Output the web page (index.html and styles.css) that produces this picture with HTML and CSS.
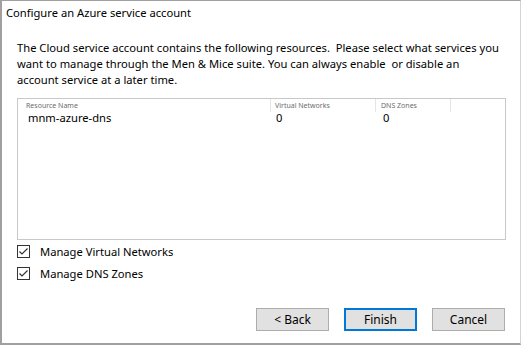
FILE: index.html
```html
<!DOCTYPE html>
<html lang="en">
<head>
  <meta charset="UTF-8">
  <title>Configure an Azure service account</title>
  <link rel="stylesheet" href="styles.css">
</head>
<body>

  <div class="dialog">
    <div class="title">Configure an Azure service account</div>

    <div class="content">
      <p class="intro">The Cloud service account contains the following resources.&nbsp; Please select what services you<br>want to manage through the Men &amp; Mice suite. You can always enable&nbsp; or disable an<br>account service at a later time.</p>

      <div class="list">
        <div class="list-head">
          <div class="col col-name">Resource Name</div>
          <div class="col col-vnet">Virtual Networks</div>
          <div class="col col-dns">DNS Zones</div>
        </div>
        <div class="list-row">
          <div class="col col-name">mnm-azure-dns</div>
          <div class="col col-vnet">0</div>
          <div class="col col-dns">0</div>
        </div>
      </div>

      <div class="checks">
        <label class="check"><span class="box"><svg width="11" height="11" viewBox="0 0 11 11"><path d="M1.5 5.5 L4 8 L9.5 2.5" fill="none" stroke="#333" stroke-width="1.2"/></svg></span>Manage Virtual Networks</label>
        <label class="check"><span class="box"><svg width="11" height="11" viewBox="0 0 11 11"><path d="M1.5 5.5 L4 8 L9.5 2.5" fill="none" stroke="#333" stroke-width="1.2"/></svg></span>Manage DNS Zones</label>
      </div>
    </div>

    <div class="buttons">
      <button>&lt; Back</button>
      <button class="default">Finish</button>
      <button>Cancel</button>
    </div>
  </div>

</body>
</html>
```

FILE: styles.css
```css
body {
  margin: 0;
  font-family: "Segoe UI", "Noto Sans", sans-serif;
  font-size: 11.2px;
  color: #000;
  background-color: #fff;
}

.dialog {
  width: 521px;
  height: 345px;
  box-sizing: border-box;
  border-top: 1px solid #a0a0a0;
  border-left: 2px solid #a0a0a0;
  border-right: 1px solid #d4d4d4;
  border-bottom: 2px solid #a0a0a0;
  display: flex;
  flex-direction: column;
}

.title {
  line-height: 16px;
  padding: 4px 0 0 4px;
  height: 24px;
}

.content {
  padding: 0 14px 0 15px;
}

.intro {
  margin: 11px 0 10px 0;
  line-height: 16px;
  white-space: nowrap;
}

.list {
  height: 140px;
  border: 1px solid #c8c8c8;
}

.list-head {
  display: flex;
  height: 13px;
  font-size: 7px;
  color: #6d6d6d;
  line-height: 13px;
}

.list-head .col {
  border-right: 1px solid #e5e5e5;
}

.list-row {
  display: flex;
  line-height: 14px;
  margin-top: -1px;
}

.col {
  box-sizing: border-box;
}

.col-name {
  width: 253px;
  padding-left: 8px;
}

.list-row .col-name {
  padding-left: 10px;
}

.col-vnet {
  width: 105px;
  padding-left: 4px;
}

.list-row .col-vnet {
  padding-left: 5px;
}

.col-dns {
  width: 75px;
  padding-left: 5px;
}

.list-row .col-dns {
  padding-left: 7px;
}

.checks {
  margin-top: 3px;
  display: flex;
  flex-direction: column;
  gap: 6px;
}

.check {
  display: flex;
  align-items: center;
  height: 16px;
}

.box {
  width: 11px;
  height: 11px;
  border: 1px solid #333;
  margin-right: 10px;
  display: flex;
}

.buttons {
  margin-top: auto;
  display: flex;
  justify-content: flex-end;
  gap: 15px;
  padding: 0 15px 12px 0;
}

button {
  width: 73px;
  height: 23px;
  font-family: inherit;
  font-size: 12px;
  background-color: #e1e1e1;
  border: 1px solid #adadad;
  padding: 0;
}

button.default {
  border: 2px solid #0078d7;
}
```
